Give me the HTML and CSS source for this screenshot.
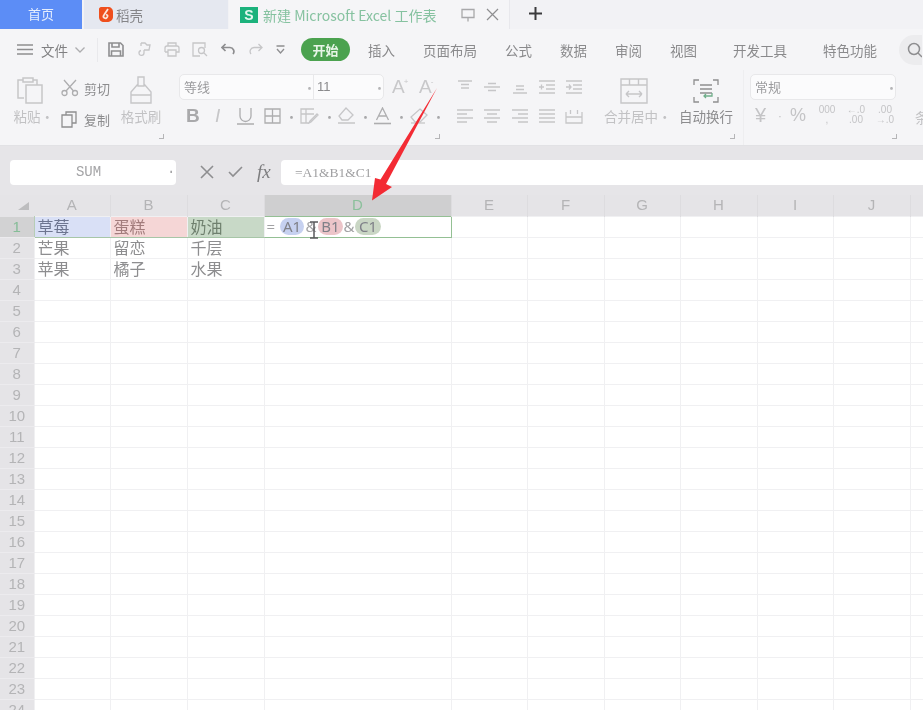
FILE: index.html
```html
<!DOCTYPE html>
<html lang="zh">
<head>
<meta charset="utf-8">
<title>新建 Microsoft Excel 工作表</title>
<link rel="stylesheet" href="styles.css">
</head>
<body>
<div class="app">
  <header class="tabs">
    <div class="tab-home">首页</div>
    <div class="tab-daoke">
      <svg width="16" height="17" viewBox="0 0 16 17"><path d="M3 1h7c3 0 5 2 5 5v5c0 3-3 5-6 5H6c-3 0-5-2-5-5V3c0-1 1-2 2-2z" fill="#ef4f1d"/><path d="M10 3L6 9q-1.500 2 .5 3t3-1.500q.5-1.500-1.500-2" fill="none" stroke="#fbe6dc" stroke-width="1.800"/></svg>
      <span>稻壳</span>
    </div>
    <div class="tab-doc">
      <span class="s-logo">S</span>
      <span class="doc-title">新建 Microsoft Excel 工作表</span>
      <svg class="doc-pin ic" width="16" height="14" viewBox="0 0 16 14"><path d="M2 1.500h12v8H2zM8 9.500v4"/></svg>
      <svg class="doc-close" width="13" height="13" viewBox="0 0 13 13"><path d="M1 1l11 11M12 1L1 12"/></svg>
    </div>
    <div class="tab-rest">
      <svg class="tab-plus" width="13" height="13" viewBox="0 0 13 13"><path d="M6.500 0v13M0 6.500h13"/></svg>
    </div>
  </header>

  <nav class="menu">
    <svg class="burger ic-d" width="16" height="11" viewBox="0 0 16 11"><path d="M0 1h16M0 5.500h16M0 10h16"/></svg>
    <span class="file-label">文件</span>
    <svg class="chev ic" width="10" height="6" viewBox="0 0 10 6"><path d="M.5.500L5 5 9.500.500"/></svg>
    <i class="menu-sep"></i>
    <div class="quick">
      <svg class="ic-d" width="16" height="15" viewBox="0 0 16 15"><path d="M1 1h11.500L15 3.500V14H1zM4 1v4h7V1M3.500 14V9h9v5" stroke-width="1.600"/></svg>
      <svg class="ic-l" width="15" height="15" viewBox="0 0 15 15"><path d="M4 1h4l2 2h3l-1 5H7M7 8v3M7 11a2.500 2.500 0 1 1-3-2.500M4 1v3"/></svg>
      <svg class="ic-l" width="16" height="15" viewBox="0 0 16 15"><path d="M4 4V1h8v3M1 10V6q0-2 2-2h10q2 0 2 2v4h-3M1 10h3M4 8h8v6H4z"/></svg>
      <svg class="ic-l" width="16" height="15" viewBox="0 0 16 15"><path d="M13 6V1H1v13h7"/><circle cx="9.500" cy="8.500" r="3"/><path d="M12 11l3 3"/></svg>
      <svg class="ic-d" width="15" height="13" viewBox="0 0 15 13"><path d="M4.500 1L1 4.500 4.500 8M1 4.500h8a4 4 0 0 1 3 6.500" stroke-width="1.700"/></svg>
      <svg class="ic-l" width="15" height="13" viewBox="0 0 15 13"><path d="M10.500 1L14 4.500 10.500 8M14 4.500H6a4 4 0 0 0-3 6.500"/></svg>
      <svg class="ic-d" width="9" height="9" viewBox="0 0 9 9"><path d="M.500 1h8M1 4l3.500 4L8 4"/></svg>
    </div>
    <span class="pill">开始</span>
    <span class="mi mi-first">插入</span>
    <span class="mi">页面布局</span>
    <span class="mi">公式</span>
    <span class="mi">数据</span>
    <span class="mi">审阅</span>
    <span class="mi">视图</span>
    <span class="mi mi-wide">开发工具</span>
    <span class="mi mi-wide">特色功能</span>
    <span class="search"><svg class="ic-d" width="16" height="16" viewBox="0 0 16 16"><circle cx="7" cy="7" r="5.500" stroke-width="1.500"/><path d="M11 11l4 4" stroke-width="1.500"/></svg></span>
  </nav>

  <section class="ribbon">
    <div class="grp g-clip">
      <div class="big b-paste">
        <svg class="ic-l" width="28" height="28" viewBox="0 0 28 28"><path d="M8 22H2V4h5M17 4h4v5M7 2h10v4H7zM10 9h16v18H10z" stroke-width="1.500"/></svg>
        <span class="lbl-l">粘贴<em>·</em></span>
      </div>
      <div class="small-col">
        <div class="small">
          <svg class="ic" width="18" height="18" viewBox="0 0 18 18"><circle cx="3.500" cy="14" r="2.500"/><circle cx="14" cy="14" r="2.500"/><path d="M5 12L15 1M12.500 12L3 1"/></svg>
          <span>剪切</span>
        </div>
        <div class="small">
          <svg class="ic-d" width="16" height="17" viewBox="0 0 16 17"><path d="M5 4V1h10v11h-4M1 4h10v12H1z"/></svg>
          <span>复制</span>
        </div>
      </div>
      <div class="big b-brush">
        <svg class="ic-l" width="24" height="28" viewBox="0 0 24 28"><path d="M9 1h6v9H9zM9 8l-7 8v11h20V16l-7-8M2 19h20" stroke-width="1.400"/></svg>
        <span class="lbl-l">格式刷</span>
      </div>
      <i class="launch"></i>
    </div>

    <div class="grp g-font">
      <div class="r-a">
        <div class="combo c-font">
          <span class="c-name">等线</span><em class="c-dot">·</em>
          <span class="c-size">11</span><em class="c-dot">·</em>
        </div>
        <span class="a-btn a-first">A<sup>+</sup></span>
        <span class="a-btn">A<sup>-</sup></span>
      </div>
      <div class="r-b">
        <span class="fb">B</span>
        <span class="fi">I</span>
        <svg class="ic u-btn" width="17" height="18" viewBox="0 0 17 18"><path d="M3 1v8a5.500 5.500 0 0 0 11 0V1M0 17h17"/></svg>
        <svg class="ic" width="17" height="16" viewBox="0 0 17 16"><path d="M1 1h15v14H1zM8.500 1v14M1 8h15"/></svg><em class="dd">·</em>
        <svg class="ic-l" width="19" height="16" viewBox="0 0 19 16"><path d="M14 1H1v14h8M1 6h13M6 1v14M10 13l7-7 1 1-7 7-2 1z"/></svg><em class="dd">·</em>
        <svg class="ic-l" width="17" height="18" viewBox="0 0 17 18"><path d="M8 1l7 7-5 5H4L1 9zM0 16h17"/></svg><em class="dd">·</em>
        <svg class="ic" width="17" height="18" viewBox="0 0 17 18"><path d="M2.500 13L8.500 1l6 12M5 9h7"/><path d="M0 16.500h17" stroke-width="1.600"/></svg><em class="dd">·</em>
        <svg class="ic-l" width="18" height="16" viewBox="0 0 18 16"><path d="M10 1l7 6-7 7H5L1 9z"/><path d="M1 15h14"/></svg><em class="dd">·</em>
      </div>
      <i class="launch"></i>
    </div>

    <div class="grp g-align">
      <div class="a-grid">
        <svg class="ic-l" width="18" height="14" viewBox="0 0 18 14"><path d="M2 1h14M5 4.500h8M5 8h8"/></svg>
        <svg class="ic-l" width="18" height="14" viewBox="0 0 18 14"><path d="M5 3.500h8M1 7h16M5 10.500h8"/></svg>
        <svg class="ic-l" width="18" height="14" viewBox="0 0 18 14"><path d="M5 6h8M5 9.500h8M2 13h14"/></svg>
        <svg class="ic-l" width="18" height="14" viewBox="0 0 18 14"><path d="M1 1h16M8 5h9M8 9h9M1 13h16M1 7h5M3.500 4.500v5"/></svg>
        <svg class="ic-l" width="18" height="14" viewBox="0 0 18 14"><path d="M1 1h16M8 5h9M8 9h9M1 13h16M1 7h5M4 4.500L6 7 4 9.500"/></svg>
        <svg class="ic-l" width="18" height="15" viewBox="0 0 18 15"><path d="M1 1h16M1 5h10M1 9h16M1 13h10"/></svg>
        <svg class="ic-l" width="18" height="15" viewBox="0 0 18 15"><path d="M1 1h16M4 5h10M1 9h16M4 13h10"/></svg>
        <svg class="ic-l" width="18" height="15" viewBox="0 0 18 15"><path d="M1 1h16M7 5h10M1 9h16M7 13h10"/></svg>
        <svg class="ic-l" width="18" height="15" viewBox="0 0 18 15"><path d="M1 1h16M1 5h16M1 9h16M1 13h16"/></svg>
        <svg class="ic-l" width="18" height="15" viewBox="0 0 18 15"><path d="M1 3v11h16V3M1 8h16M5.500 1v4M12.500 1v4"/></svg>
      </div>
    </div>

    <div class="grp g-merge">
      <svg class="ic-l" width="28" height="26" viewBox="0 0 28 26"><path d="M1 1h26v24H1zM1 7h26M9.500 1v6M18.500 1v6M6 16h16M6 16l3-3M6 16l3 3M22 16l-3-3M22 16l-3 3" stroke-width="1.400"/></svg>
      <span class="lbl-l">合并居中<em>·</em></span>
    </div>

    <div class="grp g-wrap">
      <svg class="ic-d" width="26" height="26" viewBox="0 0 26 26"><path d="M6 2H1v5M20 2h5v5M1 19v5h5M25 19v5h-5M7 7h12M7 11h12M7 15h12" stroke-width="1.300"/><path d="M19 15v3h-8M13 16l-2 2 2 2" stroke="#6fae8a"/></svg>
      <span class="lbl-d">自动换行</span>
      <i class="launch"></i>
    </div>

    <div class="grp g-num">
      <div class="combo c-num"><span class="c-name">常规</span><em class="c-dot">·</em></div>
      <div class="r-n">
        <span class="yen">¥</span><em class="dd">·</em>
        <span class="pct">%</span>
        <span class="dec">000<br><small>,</small></span>
        <span class="dec">←.0<br>.00</span>
        <span class="dec">.00<br>→.0</span>
      </div>
      <i class="launch"></i>
    </div>

    <div class="grp g-tail"><span class="lbl-l">条</span></div>
  </section>

  <section class="fbar">
    <div class="namebox"><span>SUM</span><em>·</em></div>
    <div class="fbtns">
      <svg class="ic-d" width="14" height="14" viewBox="0 0 14 14"><path d="M1 1l12 12M13 1L1 13" stroke-width="1.600"/></svg>
      <svg class="ic-d" width="15" height="12" viewBox="0 0 15 12"><path d="M1 6l4 4L14 1" stroke-width="1.600"/></svg>
      <span class="fx">fx</span>
    </div>
    <div class="finput">=A1&amp;B1&amp;C1</div>
  </section>

  <main class="sheet">
    <table class="grid">
      <colgroup>
        <col class="w-h"><col class="w-a"><col class="w-b"><col class="w-b"><col class="w-d"><col class="w-a"><col class="w-b"><col class="w-a"><col class="w-b"><col class="w-a"><col class="w-b"><col class="w-a">
      </colgroup>
      <thead>
        <tr><th class="corner"><i></i></th><th>A</th><th>B</th><th>C</th><th class="sel-col">D</th><th>E</th><th>F</th><th>G</th><th>H</th><th>I</th><th>J</th><th></th></tr>
      </thead>
      <tbody>
        <tr><th class="sel-row">1</th><td class="f-a">草莓</td><td class="f-b">蛋糕</td><td class="f-c">奶油</td><td class="active">= <span class="ref r1">A1</span><span class="amp a1">&amp;</span><span class="ref r2">B1</span><span class="amp a2">&amp;</span><span class="ref r3">C1</span></td><td></td><td></td><td></td><td></td><td></td><td></td><td></td></tr>
        <tr><th>2</th><td>芒果</td><td>留恋</td><td>千层</td><td></td><td></td><td></td><td></td><td></td><td></td><td></td><td></td></tr>
        <tr><th>3</th><td>苹果</td><td>橘子</td><td>水果</td><td></td><td></td><td></td><td></td><td></td><td></td><td></td><td></td></tr>
        <tr><th>4</th><td></td><td></td><td></td><td></td><td></td><td></td><td></td><td></td><td></td><td></td><td></td></tr>
        <tr><th>5</th><td></td><td></td><td></td><td></td><td></td><td></td><td></td><td></td><td></td><td></td><td></td></tr>
        <tr><th>6</th><td></td><td></td><td></td><td></td><td></td><td></td><td></td><td></td><td></td><td></td><td></td></tr>
        <tr><th>7</th><td></td><td></td><td></td><td></td><td></td><td></td><td></td><td></td><td></td><td></td><td></td></tr>
        <tr><th>8</th><td></td><td></td><td></td><td></td><td></td><td></td><td></td><td></td><td></td><td></td><td></td></tr>
        <tr><th>9</th><td></td><td></td><td></td><td></td><td></td><td></td><td></td><td></td><td></td><td></td><td></td></tr>
        <tr><th>10</th><td></td><td></td><td></td><td></td><td></td><td></td><td></td><td></td><td></td><td></td><td></td></tr>
        <tr><th>11</th><td></td><td></td><td></td><td></td><td></td><td></td><td></td><td></td><td></td><td></td><td></td></tr>
        <tr><th>12</th><td></td><td></td><td></td><td></td><td></td><td></td><td></td><td></td><td></td><td></td><td></td></tr>
        <tr><th>13</th><td></td><td></td><td></td><td></td><td></td><td></td><td></td><td></td><td></td><td></td><td></td></tr>
        <tr><th>14</th><td></td><td></td><td></td><td></td><td></td><td></td><td></td><td></td><td></td><td></td><td></td></tr>
        <tr><th>15</th><td></td><td></td><td></td><td></td><td></td><td></td><td></td><td></td><td></td><td></td><td></td></tr>
        <tr><th>16</th><td></td><td></td><td></td><td></td><td></td><td></td><td></td><td></td><td></td><td></td><td></td></tr>
        <tr><th>17</th><td></td><td></td><td></td><td></td><td></td><td></td><td></td><td></td><td></td><td></td><td></td></tr>
        <tr><th>18</th><td></td><td></td><td></td><td></td><td></td><td></td><td></td><td></td><td></td><td></td><td></td></tr>
        <tr><th>19</th><td></td><td></td><td></td><td></td><td></td><td></td><td></td><td></td><td></td><td></td><td></td></tr>
        <tr><th>20</th><td></td><td></td><td></td><td></td><td></td><td></td><td></td><td></td><td></td><td></td><td></td></tr>
        <tr><th>21</th><td></td><td></td><td></td><td></td><td></td><td></td><td></td><td></td><td></td><td></td><td></td></tr>
        <tr><th>22</th><td></td><td></td><td></td><td></td><td></td><td></td><td></td><td></td><td></td><td></td><td></td></tr>
        <tr><th>23</th><td></td><td></td><td></td><td></td><td></td><td></td><td></td><td></td><td></td><td></td><td></td></tr>
        <tr><th>24</th><td></td><td></td><td></td><td></td><td></td><td></td><td></td><td></td><td></td><td></td><td></td></tr>
      </tbody>
    </table>
  </main>

  <svg class="cursor" width="12" height="18" viewBox="0 0 12 18"><path d="M2 1h8M6 1v16M2 17h8"/></svg>
  <svg class="arrow" width="923" height="710" viewBox="0 0 923 710"><polygon points="437,88 386,184 392,187 372,200.500 375,178 380.500,179.500"/></svg>
</div>
</body>
</html>
```

FILE: styles.css
```css
* { box-sizing: border-box; }
html, body { margin: 0; padding: 0; background: #fff; }
body { font-family: "Noto Sans CJK SC", "Noto Sans", sans-serif; }
em { font-style: normal; }

.app {
  position: relative;
  width: 923px;
  height: 710px;
  overflow: hidden;
  display: flex;
  flex-direction: column;
  filter: blur(0.6px);
}

.ic, .ic-d, .ic-l { fill: none; flex: none; stroke-width: 1.300; }
.ic { stroke: #adadaf; }
.ic-d { stroke: #8e8e90; }
.ic-l { stroke: #c6c6c8; }

/* tabs */
.tabs { display: flex; height: 29px; flex: none; background: #f2f2f5; }
.tab-home {
  width: 82px; background: #5c8df6; color: #e4edfd;
  font-size: 13px; line-height: 27px; text-align: center;
}
.tab-daoke {
  width: 144px; margin-left: 2px; background: #e5e8f0; color: #858588;
  display: flex; align-items: center; gap: 2px; padding-left: 14px; font-size: 13.500px;
}
.tab-doc {
  width: 281px; margin-left: 1px; background: #f5f5f7; border-right: 1px solid #e8e8ec;
  display: flex; align-items: center; padding-left: 11px;
}
.s-logo {
  width: 18px; height: 16px; background: #1cb27c; color: #e7f8f0;
  font: 700 14px/16px "Liberation Sans", sans-serif; text-align: center;
}
.doc-title { margin-left: 5px; width: 197px; color: #86c2a0; white-space: nowrap; font-size: 14px; }
.doc-pin { stroke: #a8a8aa; }
.doc-close { margin-left: 10px; fill: none; stroke: #8e8e90; stroke-width: 1.200; }
.tab-rest { flex: 1; padding-left: 19px; display: flex; align-items: center; }
.tab-plus { fill: none; stroke: #3a3a3c; stroke-width: 2; margin-top: -3px; }

/* menu row */
.menu {
  height: 41px; flex: none; background: #f5f5f7;
  display: flex; align-items: center; padding-left: 17px;
  font-size: 13.500px; color: #8a8a8c; white-space: nowrap;
}
.menu > * { flex: none; }
.burger { margin-right: 8px; stroke-width: 1.500; }
.file-label { width: 26px; color: #808082; }
.chev { margin-left: 8px; }
.menu-sep { width: 1px; height: 24px; background: #e9e9ec; margin-left: 12px; margin-right: 4px; }
.quick { display: flex; width: 189px; justify-content: space-around; align-items: center; }
.pill {
  width: 49px; height: 23px; margin-left: 10px; border-radius: 12px;
  background: #4ba24f; color: #e8f5e8; text-align: center; line-height: 23px;
  font-weight: 700; font-size: 13px;
}
.mi { margin-left: 28px; }
.mi-first { margin-left: 18px; }
.mi-wide { margin-left: 36px; }
.search {
  margin-left: 22px; width: 23px; height: 30px; border-radius: 15px 0 0 15px;
  background: #ececee; display: flex; align-items: center; padding-left: 8px;
  overflow: hidden;
}

/* ribbon */
.ribbon {
  height: 76px; flex: none; background: #f5f5f7; border-bottom: 1px solid #e2e2e5;
  display: flex; font-size: 13.500px; color: #b9b9bb;
}
.grp { position: relative; flex: none; height: 75px; }
.g-clip { width: 172px; display: flex; padding-left: 12px; }
.g-font { width: 276px; padding-left: 7px; }
.g-align { width: 147px; padding: 10px 0 0 8px; }
.g-merge { width: 78px; display: flex; flex-direction: column; align-items: center; padding-top: 8px; }
.g-wrap { width: 70px; display: flex; flex-direction: column; align-items: center; padding: 8px 4px 0 0; }
.g-num { width: 162px; padding-left: 6px; border-left: 1px solid #eeeef0; }
.g-tail { flex: 1; padding: 37px 0 0 10px; overflow: hidden; white-space: nowrap; }

.launch {
  position: absolute; right: 8px; bottom: 6px; width: 5px; height: 5px;
  border-right: 1px solid #b5b5b7; border-bottom: 1px solid #b5b5b7;
}
.big { display: flex; flex-direction: column; align-items: center; padding-top: 6px; }
.b-paste { width: 36px; }
.b-brush { width: 42px; margin-left: 10px; }
.big span, .g-merge span, .g-wrap span { margin-top: 3px; white-space: nowrap; line-height: 18px; }
.lbl-l { color: #c2c2c4; }
.lbl-l em { display: inline-block; width: 6px; text-align: center; }
.lbl-d { color: #8c8c8e; }
.small-col { margin-left: 13px; width: 49px; display: flex; flex-direction: column; gap: 11px; padding-top: 8px; }
.small { display: flex; align-items: center; height: 20px; gap: 4px; font-size: 13px; color: #8c8c8e; white-space: nowrap; }
.small span { margin-left: auto; }

.combo {
  background: #fbfbfc; border: 1px solid #e8e8ea; border-radius: 5px;
  height: 26px; margin-top: 4px; display: flex; align-items: center;
  color: #9c9c9e; font-size: 13px;
}
.c-font { width: 205px; }
.c-num { width: 146px; }
.c-name { padding: 0 0 2px 4px; flex: 1; }
.c-size { width: 60px; height: 100%; border-left: 1px solid #e8e8ea; padding-left: 3px; line-height: 23px; color: #8a8a8c; font-size: 13px; font-family: "Liberation Sans", sans-serif; }
.c-dot { width: 10px; color: #b5b5b7; }
.r-a { display: flex; align-items: flex-start; }
.a-btn {
  margin: 4px 0 0 9px; width: 18px; font: 19px/26px "Liberation Sans", sans-serif; color: #c8c8ca;
  white-space: nowrap;
}
.a-first { margin-left: 8px; }
.a-btn sup { font-size: 8px; line-height: 0; vertical-align: 9px; margin-left: -1px; }
.r-b { display: flex; align-items: center; height: 20px; margin-top: 6px; padding-left: 7px; }
.r-b > * { margin-right: 4px; flex: none; }
.r-b > span.fb { font: 700 19px/20px "Liberation Sans", sans-serif; color: #a9a9ab; width: 14px; margin-right: 15px; }
.r-b > span.fi { font: italic 19px/20px "Liberation Sans", sans-serif; color: #c6c6c8; width: 8px; margin-right: 14px; }
.r-b > .u-btn { margin-right: 10px; }
.r-b > .dd { color: #a8a8aa; font-size: 13px; width: 6px; margin-right: 9px; text-align: center; }
.a-grid { display: grid; grid-template-columns: repeat(5, 18px); column-gap: 9.300px; row-gap: 15px; }

.r-n { display: flex; align-items: center; margin-top: 3px; height: 24px; padding-left: 5px; color: #c4c4c6; font-family: "Liberation Sans", sans-serif; }
.yen { font-size: 20px; width: 18px; }
.r-n .dd { width: 6px; margin: 0 4px; font-size: 13px; text-align: center; }
.pct { font-size: 18px; width: 18px; margin-left: 3px; }
.dec { font-size: 10px; line-height: 10px; text-align: center; width: 20px; margin-left: 9px; white-space: nowrap; }
.dec small { font-size: 10px; }

/* formula bar */
.fbar {
  height: 49px; flex: none; background: #e6e5e8;
  display: flex; align-items: center; padding: 3px 0 0 10px;
}
.namebox {
  width: 166px; height: 25px; background: #fff; border-radius: 4px;
  display: flex; align-items: center; color: #a4a4a6;
  font: 14px "Liberation Mono", monospace;
}
.namebox span { flex: 1; text-align: center; }
.namebox em { width: 9px; }
.fbtns { display: flex; align-items: center; width: 105px; padding-left: 24px; gap: 14px; }
.fx { font: italic 19px/24px "Liberation Serif", serif; color: #7c7c7e; }
.finput {
  flex: 1; height: 25px; background: #fff; border-radius: 4px 0 0 4px; padding-left: 14px;
  font: 13.500px/25px "Liberation Serif", serif; color: #a0a0a2;
}

/* sheet */
.sheet { flex: 1; overflow: hidden; background: #fff; }
.grid { border-collapse: collapse; table-layout: fixed; width: 986px; }
.w-h { width: 34px; }
.w-a { width: 76px; }
.w-b { width: 77px; }
.w-d { width: 187px; }
.grid thead th {
  height: 21px; padding: 0 0 1px; background: #e5e4e7; color: #b4b4b6;
  font: 400 15px/20px "Liberation Sans", sans-serif; border-right: 1px solid #dddcdf;
}
.grid thead th:first-child { border-right: 0; position: relative; }
.corner i {
  display: block; width: 0; height: 0; margin: 2px 0 0 18px;
  border-left: 11px solid transparent; border-bottom: 8px solid #bdbdbf;
}
.grid thead th.sel-col { background: #cfcfd0; color: #8cc09c; }
.grid tbody th {
  height: 21px; padding: 0; background: #e5e4e7; color: #b4b4b6;
  font: 400 15px/20px "Liberation Sans", sans-serif; border-bottom: 1px solid #ecebee;
}
.grid tbody th.sel-row { background: #d2d2d3; color: #85bd97; }
.grid td {
  height: 21px; padding: 0 0 1px 3px; border: 1px solid #f0f0f2; color: #8d8d8f;
  font-size: 16px; line-height: 19px; white-space: nowrap;
}
.grid td.f-a { background: #d9e0f6; border-left: 1px solid #b6cdb6; border-bottom: 1px solid #a7c6a7; color: #6d7590; }
.grid td.f-b { background: #f5d6d6; border-left: 1px solid #d8b4b4; border-bottom: 1px solid #a7c6a7; color: #a27c7c; }
.grid td.f-c { background: #c8d9c7; border-left: 1px solid #9cbd9c; border-bottom: 1px solid #a7c6a7; color: #6f806e; }
.grid td.active {
  border: 1.500px solid #94c094; font: 15px/19px "Noto Sans", sans-serif; color: #a2a2a4; padding-left: 2px;
}
.ref { display: inline-block; height: 17px; line-height: 17px; border-radius: 9px; text-align: center; vertical-align: top; margin-top: 1px; color: #7f8088; }
.r1 { width: 24px; background: #c6d1f0; margin-left: 1px; }
.r2 { width: 25px; background: #ecc5c9; }
.r3 { width: 26px; background: #c9d6c4; }
.amp { color: #a2a2a4; display: inline-block; text-align: center; }
.a1 { width: 14px; }
.a2 { width: 12px; }

/* overlays */
.cursor { position: absolute; left: 308px; top: 221px; fill: none; stroke: #5a5a5c; stroke-width: 1.500; }
.arrow { position: absolute; left: 0; top: 0; pointer-events: none; }
.arrow polygon { fill: #f32b34; }
```
